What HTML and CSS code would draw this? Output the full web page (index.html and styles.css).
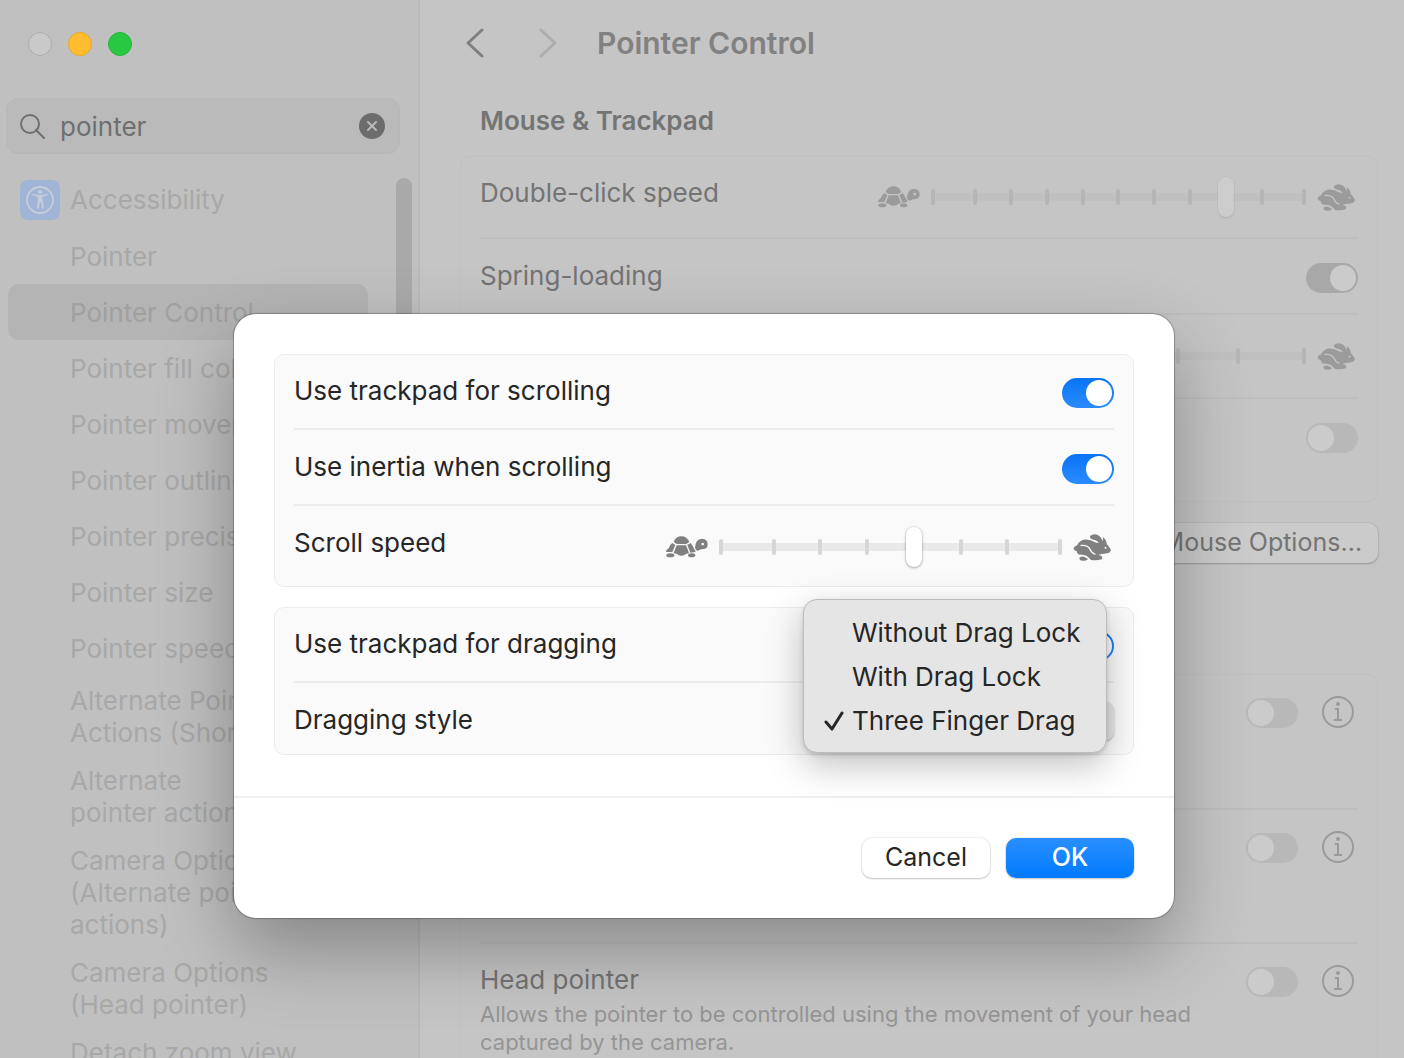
FILE: index.html
```html
<!DOCTYPE html>
<html lang="en">
<head>
<meta charset="utf-8">
<title>Pointer Control</title>
<link rel="stylesheet" href="styles.css">
</head>
<body>
<svg class="defs" aria-hidden="true">
  <symbol id="turtle" viewBox="78 108 126 64">
    <path d="M101 125Q107 108 124 108Q141 108 148 125L139 131H110Z"/>
    <path d="M97 128L106 134L97 155L79 155Q77 152 80 149Q87 145 89 138Q91 132 97 128Z"/>
    <path d="M152 128L142 134L151 157L166 155Q168 152 163 147Q158 135 152 128Z"/>
    <path d="M110 135H138L147 158Q144 160 139 160Q133 166 124 166Q115 166 110 160Q104 160 101 158Z"/>
    <ellipse cx="91" cy="165" rx="12" ry="6"/>
    <ellipse cx="155" cy="165" rx="11" ry="6"/>
    <path fill-rule="evenodd" d="M165 143Q166 116 186 115Q204 116 203 133Q202 146 190 146Q180 146 174 151Q169 153 165 143ZM188 127a4 4 0 1 0 .1 0Z"/>
  </symbol>
  <symbol id="rabbit" viewBox="1298 98 114 82">
    <path d="M1299 142Q1301 134 1309 133Q1318 116 1334 115Q1350 114 1364 123Q1371 126 1376 124Q1368 117 1357 115Q1345 111 1350 103Q1360 95 1373 101Q1383 106 1388 119Q1389 113 1387 107Q1399 114 1400 129Q1405 132 1406 137Q1413 143 1412 150Q1408 158 1396 157Q1384 158 1374 162L1383 164Q1388 168 1385 175Q1370 179 1352 177Q1345 168 1338 164Q1328 160 1314 160Q1309 156 1308 150Q1300 149 1299 142Z"/>
    <path class="cut" d="M1322 133Q1341 131 1349 144Q1354 156 1364 159"/>
    <circle class="eye" cx="1396" cy="140" r="3"/>
    <path d="M1317 170Q1325 163 1335 169L1343 174Q1340 181 1326 179Q1315 178 1317 170Z"/>
  </symbol>
  <symbol id="info" viewBox="0 0 34 34">
    <circle cx="17" cy="17" r="15" fill="none" stroke="currentColor" stroke-width="2"/>
    <circle cx="17" cy="9" r="2"/>
    <path d="M14 14H17V25M13 25H21" fill="none" stroke="currentColor" stroke-width="2"/>
  </symbol>
</svg>

<div class="window">
  <aside class="sidebar">
    <div class="lights">
      <button class="light" aria-label="Close"></button>
      <button class="light light-min" aria-label="Minimize"></button>
      <button class="light light-zoom" aria-label="Zoom"></button>
    </div>
    <div class="search">
      <svg class="search-icon" viewBox="0 0 26 26" aria-hidden="true"><circle cx="11" cy="11" r="9"/><path d="M17 17L25 25"/></svg>
      <input type="text" aria-label="Search" value="pointer">
      <button class="clear" aria-label="Clear"><svg viewBox="0 0 26 26" aria-hidden="true"><circle cx="13" cy="13" r="13"/><path d="M9 9L17 17M17 9L9 17"/></svg></button>
    </div>
    <div class="results">
      <ul class="list">
        <li><a class="item item-top" href="#"><svg class="app" viewBox="0 0 40 40" aria-hidden="true"><rect width="40" height="40" rx="8"/><circle class="ring" cx="20" cy="20" r="13"/><circle class="fig" cx="20" cy="12" r="2"/><path class="fig" d="M12 15L18 17L17 28L19 29L20 22L21 22L22 29L24 28L22 17L28 15L28 14L20 15L12 14Z"/></svg>Accessibility</a></li>
        <li><a class="item" href="#">Pointer</a></li>
        <li><a class="item selected" href="#" aria-current="page">Pointer Control</a></li>
        <li><a class="item" href="#">Pointer fill color</a></li>
        <li><a class="item" href="#">Pointer movement</a></li>
        <li><a class="item" href="#">Pointer outline color</a></li>
        <li><a class="item" href="#">Pointer precision</a></li>
        <li><a class="item" href="#">Pointer size</a></li>
        <li><a class="item" href="#">Pointer speed</a></li>
        <li><a class="item multi" href="#">Alternate Pointer<br>Actions (Shortcut)</a></li>
        <li><a class="item multi" href="#">Alternate<br>pointer actions</a></li>
        <li><a class="item multi" href="#">Camera Options<br>(Alternate pointer<br>actions)</a></li>
        <li><a class="item multi" href="#">Camera Options<br>(Head pointer)</a></li>
        <li><a class="item multi" href="#">Detach zoom view</a></li>
      </ul>
      <div class="scroller"></div>
    </div>
  </aside>

  <main class="content">
    <header class="bar">
      <button class="nav" aria-label="Back"><svg viewBox="0 0 18 30"><path d="M16 2L2 15L16 28"/></svg></button>
      <button class="nav nav-off" aria-label="Forward"><svg viewBox="0 0 18 30"><path d="M2 2L16 15L2 28"/></svg></button>
      <h1>Pointer Control</h1>
    </header>

    <h2>Mouse &amp; Trackpad</h2>
    <section class="group">
      <div class="row row-slider">
        <label for="dbl">Double-click speed</label>
        <div class="speed">
          <svg class="turtle"><use href="#turtle"/></svg>
          <div class="slider slider-wide"><div class="ticks"><i></i><i></i><i></i><i></i><i></i><i></i><i></i><i></i><i></i><i></i><i></i></div><input id="dbl" type="range" min="0" max="10" value="8"></div>
          <svg class="rabbit"><use href="#rabbit"/></svg>
        </div>
      </div>
      <div class="row">
        <label for="spring">Spring-loading</label>
        <input class="switch" id="spring" type="checkbox" checked>
      </div>
      <div class="row row-slider">
        <label for="springspeed">Spring-loading speed</label>
        <div class="speed">
          <svg class="turtle"><use href="#turtle"/></svg>
          <div class="slider slider-wide"><div class="ticks"><i></i><i></i><i></i><i></i><i></i><i></i><i></i></div><input id="springspeed" type="range" min="0" max="6" value="3"></div>
          <svg class="rabbit"><use href="#rabbit"/></svg>
        </div>
      </div>
      <div class="row row-tall">
        <label for="ignore">Ignore built-in trackpad when mouse<br>or wireless trackpad is present</label>
        <input class="switch" id="ignore" type="checkbox">
      </div>
    </section>
    <div class="actions">
      <button class="push">Trackpad Options…</button>
      <button class="push">Mouse Options…</button>
    </div>

    <h2>Alternative Control Methods</h2>
    <section class="group">
      <div class="row row-detail">
        <div class="text"><label for="keys">Mouse Keys</label><p>Allows the pointer to be controlled using the number pad.</p></div>
        <input class="switch" id="keys" type="checkbox">
        <button class="info" aria-label="Mouse Keys details"><svg><use href="#info"/></svg></button>
      </div>
      <div class="row row-detail">
        <div class="text"><label for="alt">Alternate pointer actions</label><p>Allows a switch to be used in place of mouse buttons.</p></div>
        <input class="switch" id="alt" type="checkbox">
        <button class="info" aria-label="Alternate pointer actions details"><svg><use href="#info"/></svg></button>
      </div>
      <div class="row row-detail">
        <div class="text"><label for="head">Head pointer</label><p>Allows the pointer to be controlled using the movement of your head captured by the camera.</p></div>
        <input class="switch" id="head" type="checkbox">
        <button class="info" aria-label="Head pointer details"><svg><use href="#info"/></svg></button>
      </div>
    </section>
  </main>
</div>

<div class="overlay">
  <div class="dialog" role="dialog" aria-modal="true" aria-label="Trackpad Options">
    <div class="body">
      <section class="group">
        <div class="row">
          <label for="scroll">Use trackpad for scrolling</label>
          <input class="switch" id="scroll" type="checkbox" checked>
        </div>
        <div class="row">
          <label for="inertia">Use inertia when scrolling</label>
          <input class="switch" id="inertia" type="checkbox" checked>
        </div>
        <div class="row row-slider">
          <label for="speed">Scroll speed</label>
          <div class="speed">
            <svg class="turtle"><use href="#turtle"/></svg>
            <div class="slider"><div class="ticks"><i></i><i></i><i></i><i></i><i></i><i></i><i></i><i></i></div><input id="speed" type="range" min="0" max="7" value="4"></div>
            <svg class="rabbit"><use href="#rabbit"/></svg>
          </div>
        </div>
      </section>
      <section class="group">
        <div class="row">
          <label for="drag">Use trackpad for dragging</label>
          <input class="switch" id="drag" type="checkbox" checked>
        </div>
        <div class="row row-popup">
          <label for="style">Dragging style</label>
          <select id="style"><option>Three Finger Drag</option></select>
        </div>
        <div class="menu" role="menu">
          <button role="menuitemradio" aria-checked="false">Without Drag Lock</button>
          <button role="menuitemradio" aria-checked="false">With Drag Lock</button>
          <button role="menuitemradio" aria-checked="true"><svg viewBox="0 0 20 20" aria-hidden="true"><path d="M2 11L8 18L18 2"/></svg>Three Finger Drag</button>
        </div>
      </section>
    </div>
    <footer>
      <button class="push">Cancel</button>
      <button class="push primary">OK</button>
    </footer>
  </div>
</div>
</body>
</html>
```
FILE: styles.css
```css
* { box-sizing: border-box; }

body {
  --paper: #c4c4c4;
  margin: 0;
  height: 100vh;
  overflow: hidden;
  position: relative;
  background: #c5c5c5;
  color: #747474;
  font: 26px/32px Inter, "Liberation Sans", sans-serif;
}

button, input, select { font: inherit; color: inherit; }
button { border: 0; padding: 0; background: none; }
h1, h2, p, ul { margin: 0; padding: 0; }
svg { display: block; }
.defs { position: absolute; width: 0; height: 0; }
.cut { fill: none; stroke: var(--paper); stroke-width: 4; stroke-linecap: round; }
.eye { fill: var(--paper); }

.window {
  display: grid;
  grid-template-columns: 420px minmax(0, 1fr);
  height: 100vh;
  overflow: hidden;
}

/* Sidebar */
.sidebar {
  background: #c0c0c0;
  border-right: 2px solid #bababa;
  padding-top: 32px;
}

.lights { display: flex; gap: 16px; padding-left: 28px; margin-bottom: 42px; }
.light { width: 24px; height: 24px; border-radius: 50%; background: #c9c9c9; border: 1px solid #adadad; }
.light-min { background: #febc2e; border-color: #e9a825; }
.light-zoom { background: #28c840; border-color: #22b437; }

.search {
  display: flex;
  align-items: center;
  height: 56px;
  margin: 0 18px 0 6px;
  padding: 0 14px 0 12px;
  border: 1px solid #b7b7b7;
  border-radius: 12px;
  background: #bababa;
  color: #6f6f6f;
}
.search-icon { width: 26px; height: 26px; fill: none; stroke: #6f6f6f; stroke-width: 2; stroke-linecap: round; }
.search input { flex: 1; min-width: 0; padding: 2px 0 0; margin-left: 15px; border: 0; outline: 0; background: none; }
.clear svg { width: 26px; height: 26px; fill: #6c6c6c; stroke: #bababa; stroke-width: 2; stroke-linecap: round; }
.clear circle { stroke: none; }

.results { display: flex; justify-content: space-between; padding: 18px 6px 0 8px; }
.list { list-style: none; width: 360px; }
.item {
  display: flex;
  align-items: center;
  padding: 13px 0 11px 62px;
  border-radius: 10px;
  color: #a8a8a8;
  text-decoration: none;
  white-space: nowrap;
}
.item-top { padding: 8px 0 8px 12px; gap: 10px; }
.multi { padding-top: 9px; padding-bottom: 7px; }
.selected { background: #b4b4b4; color: #a0a0a0; }
.app { width: 40px; height: 40px; fill: #9fb4d6; }
.app .ring { fill: none; stroke: #c5ccd8; stroke-width: 2; }
.app .fig { fill: #c5ccd8; }
.scroller { width: 16px; height: 400px; margin-top: 6px; border-radius: 8px; background: #a9a9a9; }

/* Main column */
.bar { display: flex; align-items: center; height: 86px; padding-left: 46px; }
.nav svg { width: 18px; height: 30px; fill: none; stroke: #7f7f7f; stroke-width: 3; stroke-linecap: round; stroke-linejoin: round; }
.nav-off { margin: 0 40px 0 55px; }
.nav-off svg { stroke: #adadad; }
h1 { font-size: 30px; line-height: 32px; font-weight: 600; color: #818181; }
h2 { font-size: 26px; line-height: 32px; font-weight: 600; margin: 19px 60px; }

.content .group { margin: 0 26px 21px 40px; }
.group { border: 1px solid #c0c0c0; border-radius: 10px; padding: 0 19px; position: relative; }
.row { display: flex; justify-content: space-between; align-items: flex-start; height: 76px; padding-top: 20px; }
.row + .row { border-top: 2px solid #ececec; padding-top: 21px; }
.content .row + .row { border-color: #bebebe; }
.row .switch { margin: 3px 0 0; }
.row-slider { height: 80px; }
.row-tall { height: 104px; }
.content .row:nth-child(3) { height: 84px; }
.row-detail { height: 133px; gap: 23px; }
.content .row-detail + .row-detail { height: 134px; padding-top: 20px; }
.text { flex: 1; }
.text label { display: block; }
.text p { font-size: 22px; line-height: 28px; color: #959595; margin-top: 4px; max-width: 720px; }
.info { width: 34px; height: 34px; margin-right: 3px; color: #9a9a9a; }
.info svg { width: 34px; height: 34px; fill: currentColor; }

.actions { display: flex; justify-content: flex-end; gap: 16px; margin: 0 26px 60px; }
.push {
  height: 40px;
  padding: 0 16px 2px;
  border-radius: 10px;
  background: #cbcbcb;
  font-size: 25px;
  box-shadow: 0 0 1px 1px rgba(0, 0, 0, .06), 0 1px 2px rgba(0, 0, 0, .2);
}

/* Switches */
.switch {
  appearance: none;
  flex: none;
  width: 52px;
  height: 30px;
  padding: 2px;
  border-radius: 15px;
  background: #b8b8b8;
}
.switch::before { content: ""; display: block; width: 26px; height: 26px; border-radius: 50%; background: #cbcbcb; }
.switch:checked { background: #a8a8a8; }
.switch:checked::before { margin-left: auto; }
.dialog .switch:checked { background: linear-gradient(#0a74f4, #2a8bff); }
.dialog .switch::before { background: #fff; }

/* Speed sliders */
.speed { display: flex; align-items: center; gap: 11px; height: 40px; padding-right: 3px; color: #9b9b9b; }
.speed svg { fill: currentColor; }
.turtle { width: 42px; height: 22px; }
.rabbit { width: 38px; height: 27px; }
.slider { display: grid; align-items: center; width: 343px; }
.slider-wide { width: 375px; }
.ticks {
  grid-area: 1 / 1;
  display: flex;
  justify-content: space-between;
  padding: 0 6px;
  background: linear-gradient(#c0c0c0, #c0c0c0) center / 100% 8px no-repeat;
}
.ticks i { width: 4px; height: 16px; border-radius: 2px; background: #b5b5b5; }
.ticks i:first-child { margin: 0 6px 0 -6px; }
.ticks i:last-child { margin: 0 -6px 0 6px; }
.slider input { grid-area: 1 / 1; appearance: none; width: 100%; height: 40px; margin: 0; background: none; }
.slider input::-webkit-slider-thumb {
  appearance: none;
  width: 16px;
  height: 40px;
  border-radius: 8px;
  background: #cccccc;
  box-shadow: 0 0 1px 1px rgba(0, 0, 0, .02), 0 1px 2px rgba(0, 0, 0, .1);
}
.dialog .speed { color: #808080; }
.dialog .ticks { background-image: linear-gradient(#e9e9e9, #e9e9e9); }
.dialog .ticks i { background: #d6d6d6; }
.dialog .slider input::-webkit-slider-thumb { background: #fff; box-shadow: 0 0 1px 1px rgba(0, 0, 0, .06), 0 1px 3px rgba(0, 0, 0, .3); }

/* Dialog */
.overlay { position: absolute; inset: 0; display: flex; justify-content: center; align-items: flex-start; padding: 314px 0 0 4px; }
.dialog {
  --paper: #fafafa;
  width: 940px;
  border-radius: 22px;
  background: #fff;
  color: #262626;
  box-shadow: 0 0 1px 1px rgba(0, 0, 0, .25), 0 32px 76px rgba(0, 0, 0, .3);
}
.body { display: grid; gap: 20px; padding: 40px 40px 41px; }
.dialog .group { background: #fafafa; border-color: #ececec; }
.dialog .row:first-child { height: 73px; }
.dialog .row-slider { height: 82px; }
.dialog .row-popup { height: 73px; }

select {
  appearance: none;
  width: 280px;
  height: 40px;
  margin: -3px 0 0;
  padding: 0 16px;
  border: 0;
  border-radius: 10px;
  background: #e6e6e6;
  box-shadow: 0 1px 2px rgba(0, 0, 0, .3);
}

.menu {
  position: absolute;
  right: 26px;
  bottom: 1px;
  width: 304px;
  display: grid;
  padding: 11px 0 9px;
  border: 1px solid #bcbcbc;
  border-radius: 14px;
  background: #e5e5e5;
  box-shadow: 0 12px 36px rgba(0, 0, 0, .25), 0 2px 4px rgba(0, 0, 0, .15);
}
.menu button { display: flex; align-items: center; gap: 8px; height: 44px; padding-left: 48px; white-space: nowrap; }
.menu button[aria-checked="true"] { padding-left: 20px; }
.menu svg { width: 20px; height: 20px; fill: none; stroke: #262626; stroke-width: 3; stroke-linecap: round; stroke-linejoin: round; }

footer { display: flex; justify-content: flex-end; gap: 16px; padding: 40px; border-top: 2px solid #f0f0f0; }
footer .push { width: 128px; background: #fff; }
footer .primary { background: linear-gradient(#2a8fff, #007aff); color: #fff; font-weight: 500; }
```
